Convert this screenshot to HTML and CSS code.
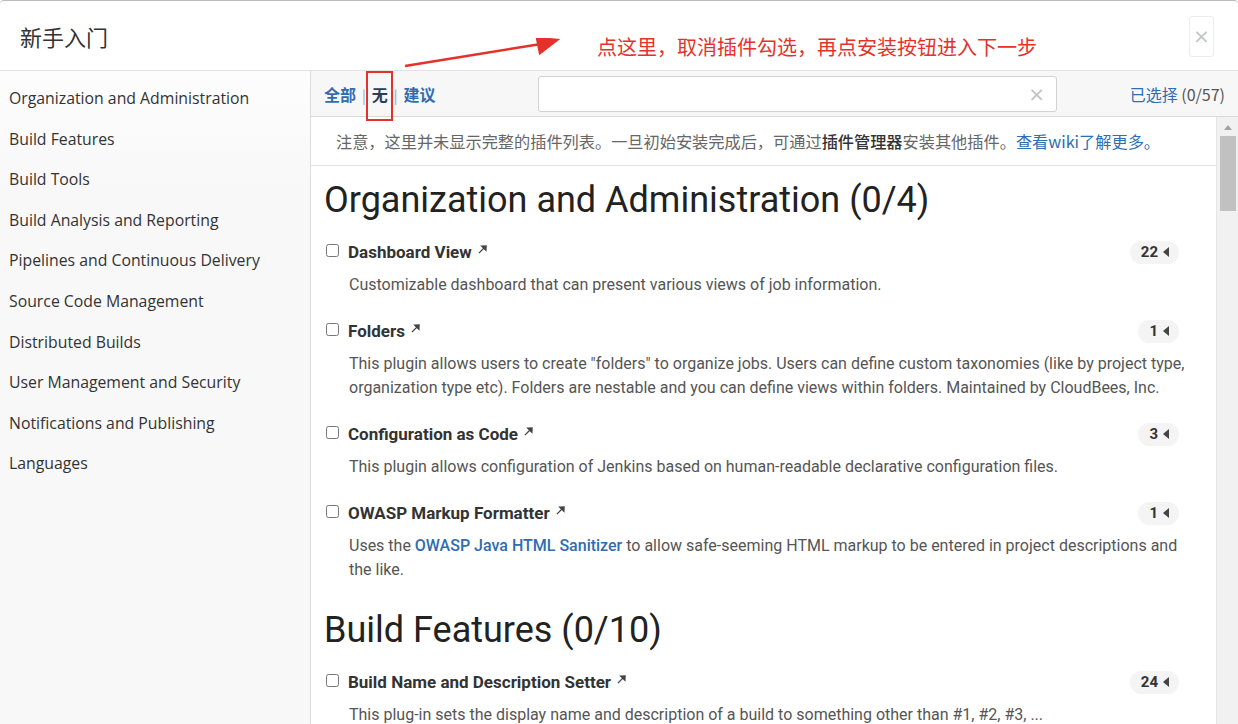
FILE: index.html
```html
<!doctype html>
<html lang="zh-CN">
<head>
<meta charset="utf-8" />
<title>新手入门</title>
<link rel="stylesheet" href="styles.css">
</head>
<body>

<div class="modal">

	<header class="modal-header">
		<h4>新手入门</h4>
		<button class="close">&times;</button>
	</header>

	<div class="modal-body">

		<nav class="categories">
			<a>Organization and Administration</a>
			<a>Build Features</a>
			<a>Build Tools</a>
			<a>Build Analysis and Reporting</a>
			<a>Pipelines and Continuous Delivery</a>
			<a>Source Code Management</a>
			<a>Distributed Builds</a>
			<a>User Management and Security</a>
			<a>Notifications and Publishing</a>
			<a>Languages</a>
		</nav>

		<section class="plugins">

			<div class="toolbar">
				<div class="select-links">
					<a>全部</a><span class="sep">|</span><a class="current">无</a><span class="sep">|</span><a>建议</a>
				</div>
				<div class="search">
					<input type="text">
					<span class="clear">&times;</span>
				</div>
				<div class="selected"><a>已选择</a> (0/57)</div>
			</div>

			<div class="list-wrap">
				<div class="plugin-list">

					<p class="notice">注意，这里并未显示完整的插件列表。一旦初始安装完成后，可通过<b>插件管理器</b>安装其他插件。<a>查看wiki了解更多。</a></p>

					<div class="category">
						<h1>Organization and Administration (0/4)</h1>

						<div class="plugin">
							<div class="plugin-head">
								<input type="checkbox">
								<span class="name">Dashboard View</span>
								<svg class="ext" viewBox="0 0 10 10"><path d="M1 9 L7.5 2.5" /><polygon points="4,1.2 9,1 8.8,6" /></svg>
								<span class="deps">22 <i></i></span>
							</div>
							<p class="desc">Customizable dashboard that can present various views of job information.</p>
						</div>

						<div class="plugin">
							<div class="plugin-head">
								<input type="checkbox">
								<span class="name">Folders</span>
								<svg class="ext" viewBox="0 0 10 10"><path d="M1 9 L7.5 2.5" /><polygon points="4,1.2 9,1 8.8,6" /></svg>
								<span class="deps">1 <i></i></span>
							</div>
							<p class="desc">This plugin allows users to create "folders" to organize jobs. Users can define custom taxonomies (like by project type, organization type etc). Folders are nestable and you can define views within folders. Maintained by CloudBees, Inc.</p>
						</div>

						<div class="plugin">
							<div class="plugin-head">
								<input type="checkbox">
								<span class="name">Configuration as Code</span>
								<svg class="ext" viewBox="0 0 10 10"><path d="M1 9 L7.5 2.5" /><polygon points="4,1.2 9,1 8.8,6" /></svg>
								<span class="deps">3 <i></i></span>
							</div>
							<p class="desc">This plugin allows configuration of Jenkins based on human-readable declarative configuration files.</p>
						</div>

						<div class="plugin">
							<div class="plugin-head">
								<input type="checkbox">
								<span class="name">OWASP Markup Formatter</span>
								<svg class="ext" viewBox="0 0 10 10"><path d="M1 9 L7.5 2.5" /><polygon points="4,1.2 9,1 8.8,6" /></svg>
								<span class="deps">1 <i></i></span>
							</div>
							<p class="desc">Uses the <a>OWASP Java HTML Sanitizer</a> to allow safe-seeming HTML markup to be entered in project descriptions and the like.</p>
						</div>
					</div>

					<div class="category">
						<h1>Build Features (0/10)</h1>

						<div class="plugin">
							<div class="plugin-head">
								<input type="checkbox">
								<span class="name">Build Name and Description Setter</span>
								<svg class="ext" viewBox="0 0 10 10"><path d="M1 9 L7.5 2.5" /><polygon points="4,1.2 9,1 8.8,6" /></svg>
								<span class="deps">24 <i></i></span>
							</div>
							<p class="desc">This plug-in sets the display name and description of a build to something other than #1, #2, #3, ...</p>
						</div>
					</div>

				</div>

				<div class="scrollbar">
					<span class="up"></span>
					<span class="thumb"></span>
				</div>
			</div>

		</section>
	</div>

	<!-- annotation drawn over the screenshot -->
	<div class="mark-box"></div>
	<svg class="mark-arrow" viewBox="0 0 160 30"><path d="M2 28 L138 6" /><polygon points="134,0 154,2 137,15" /></svg>
	<div class="mark-text">点这里，取消插件勾选，再点安装按钮进入下一步</div>

</div>

</body>
</html>
```

FILE: styles.css
```css
:root {
	--link: #2f6db0;
	--text: #333;
	--muted: #555;
	--line: #e3e3e3;
	--mark: #e4322b;
	font-family: "Open Sans", "Noto Sans CJK SC", sans-serif;
	color: var(--text);
}

body, html {
	margin: 0;
	padding: 0;
}

a {
	color: var(--link);
	cursor: pointer;
}

.modal {
	position: relative;
	height: 100vh;
	display: flex;
	flex-direction: column;
	border-top: 1px solid #bbb;
	border-radius: 4px 4px 0 0;
	box-sizing: border-box;
	overflow: hidden;
}


/* Header */

.modal-header {
	height: 69px;
	flex: none;
	display: flex;
	align-items: center;
	justify-content: space-between;
	padding: 0 24px 0 20px;
	border-bottom: 1px solid var(--line);
}

.modal-header h4 {
	margin: 0;
	font-family: "Noto Sans CJK SC", sans-serif;
	font-weight: 400;
	font-size: 22px;
	color: #333;
}

.close {
	width: 25px;
	height: 41px;
	margin-top: 1px;
	padding: 0;
	border: 1px solid #ececec;
	border-radius: 3px;
	background: #fff;
	color: #c4c4c4;
	font-family: "DejaVu Sans", sans-serif;
	font-size: 20px;
	line-height: 1;
}


/* Body */

.modal-body {
	flex: 1;
	display: flex;
	min-height: 0;
}

.categories {
	width: 310px;
	flex: none;
	padding-top: 7px;
	background: linear-gradient(#fdfdfd, #f8f8f8 120px);
	border-right: 1px solid #dcdcdc;
}

.categories a {
	display: block;
	padding-left: 9px;
	line-height: 40.6px;
	font-size: 15.8px;
	color: #333;
}

.plugins {
	flex: 1;
	display: flex;
	flex-direction: column;
	min-width: 0;
}


/* Toolbar */

.toolbar {
	height: 45px;
	flex: none;
	display: flex;
	align-items: center;
	padding: 0 13px 0 13px;
	background: #f7f7f7;
	border-bottom: 1px solid #dadada;
	font-family: "Noto Sans CJK SC", sans-serif;
}

.select-links {
	width: 214px;
	font-size: 16px;
	font-weight: 700;
}

.select-links .sep {
	margin: 0 6px 0 6px;
	color: #8aa6c4;
	font-weight: 400;
	font-size: 14px;
}

.select-links .current {
	color: #2c3e57;
}

.search {
	position: relative;
	width: 519px;
}

.search input {
	display: block;
	width: 100%;
	height: 36px;
	box-sizing: border-box;
	border: 1px solid #d2d2d2;
	border-radius: 3px;
	background: #fff;
}

.search .clear {
	position: absolute;
	right: 12px;
	top: 6px;
	color: #c2c2c2;
	font-family: "DejaVu Sans", sans-serif;
	font-size: 20px;
}

.selected {
	margin-left: auto;
	font-size: 16px;
	color: #555;
}


/* List */

.list-wrap {
	flex: 1;
	display: flex;
	min-height: 0;
}

.plugin-list {
	flex: 1;
	overflow: hidden;
	padding: 0 20px 0 13px;
}

.notice {
	margin: 0 -20px 0 -13px;
	padding: 0 0 0 25px;
	height: 48px;
	line-height: 48px;
	border-bottom: 1px solid var(--line);
	font-family: "Noto Sans CJK SC", sans-serif;
	font-size: 16.2px;
	color: #666;
	white-space: nowrap;
}

.notice b {
	color: #333;
	font-weight: 500;
}

.category h1 {
	margin: 15px 0 21px;
	font-family: "Roboto", sans-serif;
	font-weight: 400;
	font-size: 36px;
	line-height: 38px;
	color: #222;
}

.category + .category h1 {
	margin-top: 29px;
}

.plugin {
	margin-bottom: 22px;
	font-family: "Roboto", sans-serif;
}

.plugin-head {
	display: flex;
	align-items: center;
	height: 24px;
}

.plugin-head input {
	margin: 0 9px 3px 2px;
	width: 13px;
	height: 13px;
}

.name {
	font-weight: 700;
	font-size: 17px;
	color: #333;
}

.ext {
	width: 9px;
	height: 9px;
	margin: 0 0 6px 6px;
	fill: #444;
	stroke: #444;
	stroke-width: 1.4;
}

.deps {
	margin-left: auto;
	margin-right: 17px;
	display: flex;
	align-items: center;
	padding: 0 10px 0 11px;
	height: 23px;
	border-radius: 12px;
	background: #f4f4f4;
	font-weight: 700;
	font-size: 15px;
	color: #333;
}

.deps i {
	margin-left: 5px;
	border-style: solid;
	border-width: 5px 6px 5px 0;
	border-color: transparent #444 transparent transparent;
}

.desc {
	margin: 9px 0 0 25px;
	font-size: 16px;
	line-height: 24px;
	color: #555;
}

.desc a {
	font-weight: 500;
}


/* Scrollbar */

.scrollbar {
	width: 21px;
	flex: none;
	background: #f1f1f1;
	border-left: 1px solid #e6e6e6;
	display: flex;
	flex-direction: column;
	align-items: center;
}

.scrollbar .up {
	margin-top: 8px;
	border-style: solid;
	border-width: 0 4px 5px 4px;
	border-color: transparent transparent #a3a3a3 transparent;
}

.scrollbar .thumb {
	margin-top: 6px;
	width: 16px;
	height: 75px;
	background: #c1c1c1;
}


/* Annotation */

.mark-box {
	position: absolute;
	left: 366px;
	top: 70px;
	width: 23px;
	height: 46px;
	border: 2px solid var(--mark);
}

.mark-arrow {
	position: absolute;
	left: 403px;
	top: 37px;
	width: 160px;
	height: 30px;
	fill: var(--mark);
	stroke: var(--mark);
	stroke-width: 2.5;
}

.mark-text {
	position: absolute;
	left: 597px;
	top: 31px;
	font-family: "Noto Sans CJK SC", sans-serif;
	font-size: 20px;
	color: var(--mark);
}
```
